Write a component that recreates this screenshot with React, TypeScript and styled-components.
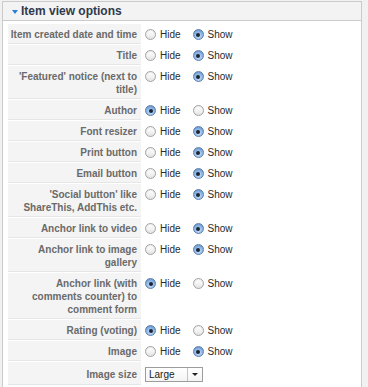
import * as React from "react"
import styled, { createGlobalStyle } from "styled-components"

type Choice = "hide" | "show"

interface Row {
  label: string
  value?: Choice
  select?: string
}

const rows: Row[] = [
  { label: "Item created date and time", value: "show" },
  { label: "Title", value: "show" },
  { label: "'Featured' notice (next to title)", value: "show" },
  { label: "Author", value: "hide" },
  { label: "Font resizer", value: "show" },
  { label: "Print button", value: "show" },
  { label: "Email button", value: "show" },
  { label: "'Social button' like ShareThis, AddThis etc.", value: "show" },
  { label: "Anchor link to video", value: "show" },
  { label: "Anchor link to image gallery", value: "show" },
  { label: "Anchor link (with comments counter) to comment form", value: "hide" },
  { label: "Rating (voting)", value: "hide" },
  { label: "Image", value: "show" },
  { label: "Image size", select: "Large" }
]

const GlobalStyle = createGlobalStyle`
  html, body {
    margin: 0;
    padding: 0;
    background: #f1f1f1;
  }
  body {
    font-family: "Liberation Sans", Arial, sans-serif;
  }
`

const Panel = styled.div`
  width: 358px;
  margin: 1px 0 0 2px;
  border: 1px solid #cbcbcb;
  background: #fff;
  height: 400px;
  overflow: hidden;
`

const PanelHeader = styled.div`
  display: flex;
  align-items: center;
  height: 18px;
  padding-left: 9px;
  background: #f3f3f3;
  border-bottom: 1px solid #cbcbcb;
`

const Toggle = styled.span`
  width: 0;
  height: 0;
  border-left: 3px solid transparent;
  border-right: 3px solid transparent;
  border-top: 4px solid #2b7fd6;
  margin-right: 3px;
  margin-top: 1px;
`

const Title = styled.h3`
  margin: 0;
  font-size: 12px;
  font-weight: bold;
  color: #2f3a4c;
  line-height: 18px;
`

const OptionsTable = styled.table`
  border-spacing: 1px;
  margin: 2px 0 0 4px;
`

const LabelCell = styled.td<{ $tall?: boolean }>`
  width: 128px;
  padding: ${props => (props.$tall ? "6px 4px 3px 1px" : "4px 4px 2px 1px")};
  background: #f4f4f4;
  border-bottom: 1px solid #e6e6e6;
  color: #6a6a6a;
  font-size: 10px;
  font-weight: bold;
  line-height: 13px;
  text-align: right;
  vertical-align: top;
`

const ValueCell = styled.td`
  padding: 4px 3px 2px 3px;
  vertical-align: top;
`

const Choices = styled.div`
  display: flex;
  align-items: center;
  height: 13px;
`

const ChoiceItem = styled.label`
  display: inline-flex;
  align-items: center;
  margin-right: 12px;
  font-size: 10px;
  line-height: 13px;
  color: #2a2a2a;
`

const Radio = styled.span<{ $checked?: boolean }>`
  position: relative;
  box-sizing: border-box;
  width: 11px;
  height: 11px;
  margin-right: 4px;
  border-radius: 50%;
  border: 1px solid ${props => (props.$checked ? "#5d7fae" : "#a3a3a3")};
  background: ${props =>
    props.$checked
      ? "radial-gradient(circle at 50% 70%, #c9e0f8 0%, #8bb5e6 55%, #6b98cf 100%)"
      : "linear-gradient(to bottom, #ffffff 0%, #f1f1f1 60%, #e2e2e2 100%)"};
  box-shadow: inset 0 1px 1px rgba(0, 0, 0, 0.08);

  &::after {
    content: "";
    display: ${props => (props.$checked ? "block" : "none")};
    position: absolute;
    left: 50%;
    top: 50%;
    width: 4px;
    height: 4px;
    margin: -2px 0 0 -2px;
    border-radius: 50%;
    background: #1b2533;
  }
`

const SelectBox = styled.div`
  display: flex;
  align-items: stretch;
  box-sizing: border-box;
  width: 58px;
  height: 15px;
  margin-top: 1px;
  border: 1px solid #9c9c9c;
  background: linear-gradient(to bottom, #ffffff 0%, #f4f4f4 100%);
  font-size: 10px;
  color: #1a1a1a;
`

const SelectValue = styled.span`
  flex: 1;
  padding-left: 3px;
  line-height: 13px;
`

const SelectArrow = styled.span`
  display: flex;
  align-items: center;
  justify-content: center;
  width: 14px;
  border-left: 1px solid #c4c4c4;

  &::before {
    content: "";
    border-left: 3px solid transparent;
    border-right: 3px solid transparent;
    border-top: 3px solid #222;
  }
`

const RadioGroup = ({ value }: { value: Choice }) => (
  <Choices>
    <ChoiceItem>
      <Radio $checked={value === "hide"} />
      Hide
    </ChoiceItem>
    <ChoiceItem>
      <Radio $checked={value === "show"} />
      Show
    </ChoiceItem>
  </Choices>
)

export default function App() {
  return (
    <>
      <GlobalStyle />
      <Panel>
        <PanelHeader>
          <Toggle />
          <Title>Item view options</Title>
        </PanelHeader>
        <OptionsTable>
          <tbody>
            {rows.map(row => (
              <tr key={row.label}>
                <LabelCell $tall={!!row.select}>{row.label}</LabelCell>
                <ValueCell>
                  {row.select ? (
                    <SelectBox>
                      <SelectValue>{row.select}</SelectValue>
                      <SelectArrow />
                    </SelectBox>
                  ) : (
                    row.value && <RadioGroup value={row.value} />
                  )}
                </ValueCell>
              </tr>
            ))}
          </tbody>
        </OptionsTable>
      </Panel>
    </>
  )
}
